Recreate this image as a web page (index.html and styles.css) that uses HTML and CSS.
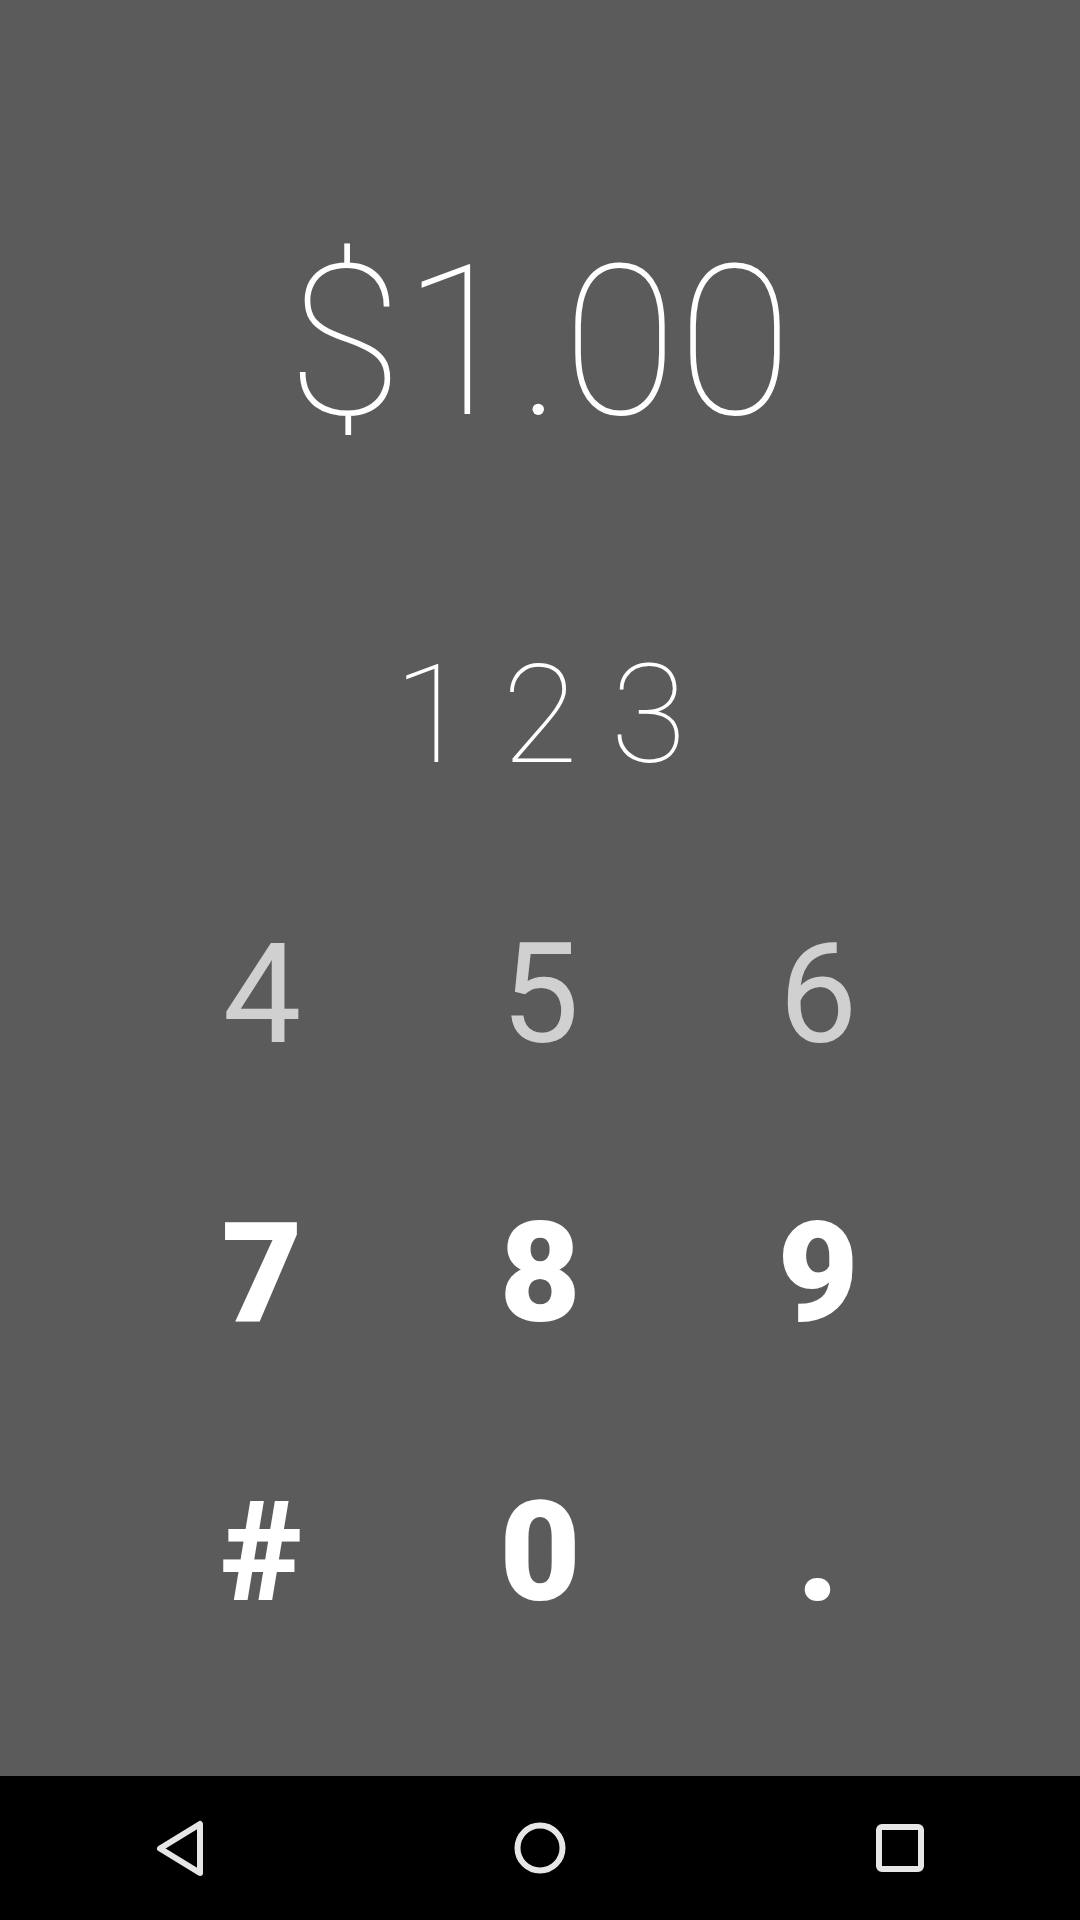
FILE: index.html
```html
<!DOCTYPE html>
<html>
<head>
<meta charset="utf-8">
<link rel="stylesheet" href="styles.css">
</head>
<body>
<div class="screen">
  <main class="main">
    <div class="amount">$1.00</div>
    <div class="row-thin">1 2 3</div>
    <div class="keys regular">
      <div class="key">4</div><div class="key">5</div><div class="key">6</div>
    </div>
    <div class="keys bold">
      <div class="key">7</div><div class="key">8</div><div class="key">9</div>
    </div>
    <div class="keys bold">
      <div class="key">#</div><div class="key">0</div><div class="key">.</div>
    </div>
  </main>
  <nav class="nav">
    <div class="nav-btn">
      <svg width="60" height="60" viewBox="0 0 60 60"><polygon points="10,30.5 50,6 50,55" fill="none" stroke="#e6e6e6" stroke-width="6" stroke-linejoin="round"/></svg>
    </div>
    <div class="nav-btn">
      <svg width="60" height="60" viewBox="0 0 60 60"><circle cx="30" cy="30" r="22.5" fill="none" stroke="#e6e6e6" stroke-width="6"/></svg>
    </div>
    <div class="nav-btn">
      <svg width="60" height="60" viewBox="0 0 60 60"><rect x="9" y="9" width="42" height="42" rx="3" fill="none" stroke="#e6e6e6" stroke-width="6"/></svg>
    </div>
  </nav>
</div>
</body>
</html>
```
FILE: styles.css
```css
html, body {
  margin: 0;
  padding: 0;
}
body {
  width: 1080px;
  height: 1920px;
  overflow: hidden;
  font-family: Roboto, "Liberation Sans", sans-serif;
}
.screen {
  display: flex;
  flex-direction: column;
  width: 1080px;
  height: 1920px;
}
.main {
  flex: 1;
  background: #5b5b5b;
  color: #ffffff;
  padding-top: 192px;
  box-sizing: border-box;
}
.amount {
  font-size: 210px;
  font-weight: 100;
  line-height: 300px;
  height: 300px;
  text-align: center;
  margin-bottom: 84px;
}
.row-thin {
  font-size: 138px;
  font-weight: 100;
  line-height: 279px;
  height: 279px;
  text-align: center;
}
.keys {
  display: grid;
  grid-template-columns: repeat(3, 278px);
  justify-content: center;
  height: 279px;
  line-height: 279px;
  font-size: 140px;
  text-align: center;
}
.regular {
  font-weight: 400;
  color: #d0d0d0;
}
.bold {
  font-weight: 900;
  color: #ffffff;
}
.nav {
  height: 144px;
  background: #000000;
  display: grid;
  grid-template-columns: repeat(3, 1fr);
  align-items: center;
  justify-items: center;
}
.nav-btn {
  width: 60px;
  height: 60px;
}
.nav-btn svg {
  display: block;
}
```
